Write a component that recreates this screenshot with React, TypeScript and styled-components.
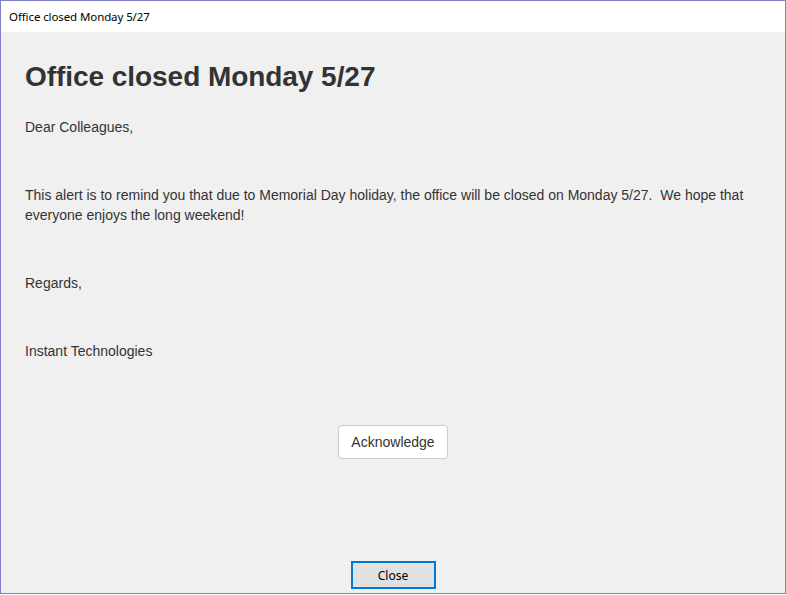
import { createGlobalStyle, styled } from "styled-components";

const GlobalStyle = createGlobalStyle`
  html, body {
    margin: 0;
    padding: 0;
    background: #ffffff;
  }
  * {
    box-sizing: border-box;
  }
`;

const Frame = styled.div`
  width: 786px;
  height: 594px;
  border: 1px solid #7f7fc8;
  display: flex;
  flex-direction: column;
  background: #f0f0f0;
`;

const TitleBar = styled.div`
  height: 31px;
  flex-shrink: 0;
  background: #ffffff;
  display: flex;
  align-items: center;
  padding: 0 0 0 8px;
  font-family: "Noto Sans", "Open Sans", sans-serif;
  font-size: 11.5px;
  color: #000;
  letter-spacing: -0.1px;
`;

const Body = styled.main`
  flex: 1;
  padding: 30px 24px 0;
  font-family: "Liberation Sans", Arial, sans-serif;
  font-size: 14px;
  line-height: 20px;
  color: #333333;
`;

const Heading = styled.h2`
  margin: 0 0 24px;
  font-size: 28px;
  line-height: 1.1;
  font-weight: 700;
  color: #333333;
  letter-spacing: -0.05px;
`;

const Para = styled.p`
  margin: 14px 0;
  &:first-of-type {
    margin-top: 0;
  }
`;

const Actions = styled.div`
  display: flex;
  justify-content: center;
  margin-top: 64px;
`;

const AckButton = styled.button`
  height: 34px;
  padding: 6px 12px;
  background: #ffffff;
  border: 1px solid #cccccc;
  border-radius: 4px;
  font-family: "Liberation Sans", Arial, sans-serif;
  font-size: 14px;
  line-height: 20px;
  color: #333333;
  cursor: pointer;
`;

const Footer = styled.footer`
  display: flex;
  justify-content: center;
  padding: 0 0 4px;
`;

const CloseButton = styled.button`
  width: 85px;
  height: 28px;
  background: #e1e1e1;
  border: 2px solid #0078d7;
  font-family: "Noto Sans", "Open Sans", sans-serif;
  font-size: 12px;
  color: #000;
  padding: 0;
`;

const paragraphs = [
  "Dear Colleagues,",
  "\u00a0",
  "This alert is to remind you that due to Memorial Day holiday, the office will be closed on Monday 5/27.\u00a0 We hope that everyone enjoys the long weekend!",
  "\u00a0",
  "Regards,",
  "\u00a0",
  "Instant Technologies",
];

const App = () => {
  return (
    <>
      <GlobalStyle />
      <Frame>
        <TitleBar>Office closed Monday 5/27</TitleBar>
        <Body>
          <Heading>Office closed Monday 5/27</Heading>
          {paragraphs.map((text, i) => (
            <Para key={i}>{text}</Para>
          ))}
          <Actions>
            <AckButton>Acknowledge</AckButton>
          </Actions>
        </Body>
        <Footer>
          <CloseButton>Close</CloseButton>
        </Footer>
      </Frame>
    </>
  );
};

export default App;
